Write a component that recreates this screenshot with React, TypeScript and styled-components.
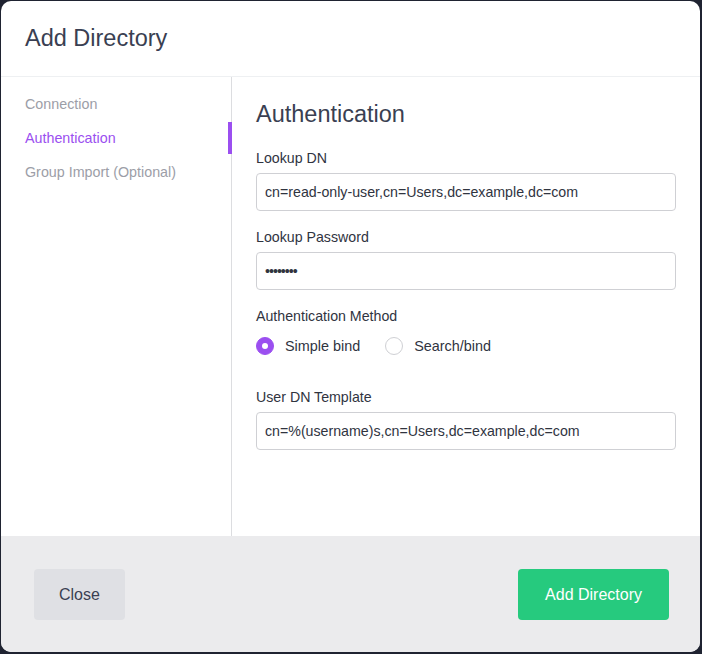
import React, { FC } from 'react';
import styled, { createGlobalStyle } from 'styled-components';

const GlobalStyle = createGlobalStyle`
  html, body {
    margin: 0;
    padding: 0;
    background: #1f2331;
  }
  body {
    font-family: "Liberation Sans", Arial, sans-serif;
  }
  * {
    box-sizing: border-box;
  }
`;

const Modal = styled.div`
  margin: 1px;
  width: 699px;
  height: 651px;
  background: #ffffff;
  border-radius: 10px;
  overflow: hidden;
  display: flex;
  flex-direction: column;
`;

const Header = styled.div`
  height: 76px;
  flex-shrink: 0;
  border-bottom: 1px solid #eef0f2;
  padding: 0 24px;
  display: flex;
  align-items: center;
`;

const Title = styled.h1`
  margin: 0 0 1px;
  font-size: 23.5px;
  font-weight: 400;
  color: #3a3f52;
`;

const Body = styled.div`
  flex: 1;
  display: flex;
`;

const Sidebar = styled.nav`
  width: 231px;
  flex-shrink: 0;
  border-right: 1px solid #dcdde0;
  padding-top: 10px;
  display: flex;
  flex-direction: column;
`;

const NavItem = styled.div<{ $active?: boolean }>`
  position: relative;
  height: 34px;
  padding-left: 24px;
  display: flex;
  align-items: center;
  font-size: 14.3px;
  color: ${(props) => (props.$active ? '#9b4ff0' : '#9c9ea7')};

  &::after {
    content: '';
    display: ${(props) => (props.$active ? 'block' : 'none')};
    position: absolute;
    right: -1px;
    top: 1px;
    width: 4px;
    height: 32px;
    background: #9b4ff0;
  }
`;

const Content = styled.div`
  flex: 1;
  padding: 22px 24px 0 24px;
  display: flex;
  flex-direction: column;
`;

const SectionTitle = styled.h2`
  margin: 0 0 19px;
  font-size: 23.5px;
  line-height: 30px;
  font-weight: 400;
  color: #3a3f52;
`;

const Field = styled.div<{ $gap?: number }>`
  display: flex;
  flex-direction: column;
  margin-bottom: ${(props) => props.$gap ?? 16}px;
`;

const Label = styled.label`
  font-size: 14.2px;
  line-height: 20px;
  color: #30343f;
  margin-bottom: 5px;
`;

const TextInput = styled.input<{ $secret?: boolean }>`
  height: 38px;
  width: 420px;
  border: 1px solid #cfd0d4;
  border-radius: 4px;
  padding: 0 8px;
  font-family: "Liberation Sans", Arial, sans-serif;
  font-size: 14.2px;
  color: #30343f;
  background: #ffffff;
  outline: none;
  letter-spacing: ${(props) => (props.$secret ? '-1px' : 'normal')};
`;

const RadioRow = styled.div`
  display: flex;
  align-items: center;
  height: 30px;
  margin-bottom: 26px;
`;

const RadioOption = styled.div`
  display: flex;
  align-items: center;
  margin-right: 25px;
  font-size: 14.4px;
  color: #30343f;
`;

const RadioDot = styled.span<{ $checked?: boolean }>`
  width: 18px;
  height: 18px;
  border-radius: 50%;
  margin-right: 11px;
  display: flex;
  align-items: center;
  justify-content: center;
  background: ${(props) => (props.$checked ? '#9b4ff0' : '#ffffff')};
  border: 1px solid ${(props) => (props.$checked ? '#9b4ff0' : '#cfd0d4')};

  &::after {
    content: '';
    width: 6px;
    height: 6px;
    border-radius: 50%;
    background: #ffffff;
    display: ${(props) => (props.$checked ? 'block' : 'none')};
  }
`;

const Footer = styled.div`
  height: 116px;
  flex-shrink: 0;
  background: #ebebed;
  padding: 33px 31px 32px 33px;
  display: flex;
  justify-content: space-between;
  align-items: flex-start;
`;

const Button = styled.button<{ $primary?: boolean }>`
  height: 51px;
  padding: 0 ${(props) => (props.$primary ? 27 : 25)}px;
  border: none;
  border-radius: 4px;
  font-family: "Liberation Sans", Arial, sans-serif;
  font-size: 16px;
  cursor: pointer;
  background: ${(props) => (props.$primary ? '#26ca7e' : '#dfe0e4')};
  color: ${(props) => (props.$primary ? '#ffffff' : '#3a3f52')};
`;

const App: FC = function App() {
  return (
    <>
      <GlobalStyle />
      <Modal>
        <Header>
          <Title>Add Directory</Title>
        </Header>
        <Body>
          <Sidebar>
            <NavItem>Connection</NavItem>
            <NavItem $active>Authentication</NavItem>
            <NavItem>Group Import (Optional)</NavItem>
          </Sidebar>
          <Content>
            <SectionTitle>Authentication</SectionTitle>
            <Field>
              <Label>Lookup DN</Label>
              <TextInput readOnly value="cn=read-only-user,cn=Users,dc=example,dc=com" />
            </Field>
            <Field>
              <Label>Lookup Password</Label>
              <TextInput readOnly type="password" $secret value="password" />
            </Field>
            <Field $gap={0}>
              <Label>Authentication Method</Label>
            </Field>
            <RadioRow>
              <RadioOption>
                <RadioDot $checked />
                Simple bind
              </RadioOption>
              <RadioOption>
                <RadioDot />
                Search/bind
              </RadioOption>
            </RadioRow>
            <Field>
              <Label>User DN Template</Label>
              <TextInput readOnly value="cn=%(username)s,cn=Users,dc=example,dc=com" />
            </Field>
          </Content>
        </Body>
        <Footer>
          <Button>Close</Button>
          <Button $primary>Add Directory</Button>
        </Footer>
      </Modal>
    </>
  );
};

export default App;
